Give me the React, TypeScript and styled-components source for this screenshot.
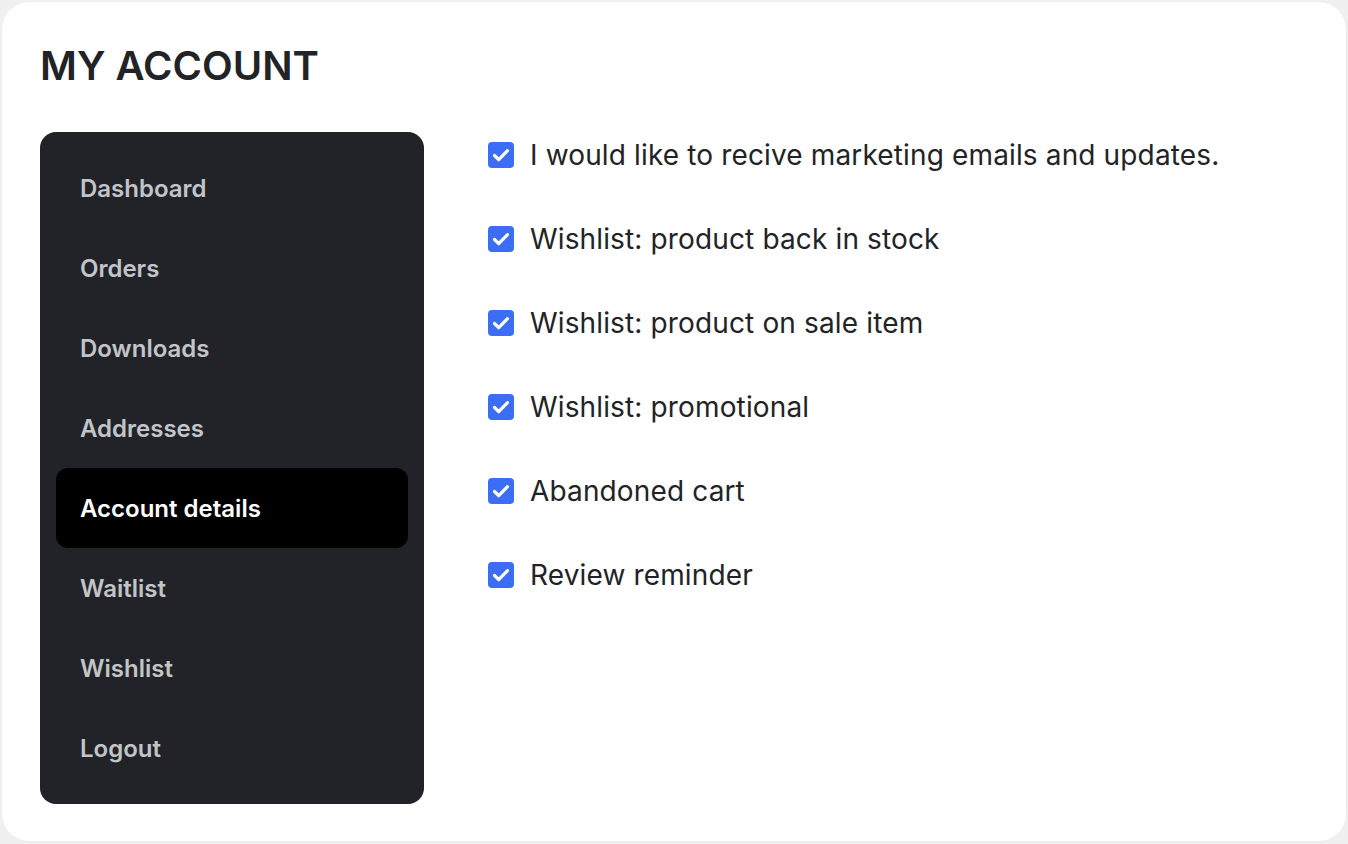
import styled, { createGlobalStyle } from "styled-components";

const GlobalStyle = createGlobalStyle`
  html, body {
    margin: 0;
    padding: 0;
    background: #f0f0f0;
    font-family: Inter, "Noto Sans", sans-serif;
  }
  * {
    box-sizing: border-box;
  }
`;

const menu = [
  "Dashboard",
  "Orders",
  "Downloads",
  "Addresses",
  "Account details",
  "Waitlist",
  "Wishlist",
  "Logout",
];

const options = [
  "I would like to recive marketing emails and updates.",
  "Wishlist: product back in stock",
  "Wishlist: product on sale item",
  "Wishlist: promotional",
  "Abandoned cart",
  "Review reminder",
];

const CheckIcon = () => (
  <svg width="26" height="26" viewBox="0 0 26 26">
    <rect x="0" y="0" width="26" height="26" rx="4" fill="#3c6ef5" />
    <path
      d="M6.5 13.5l4.2 4.2 8.8-9"
      fill="none"
      stroke="#fff"
      strokeWidth="3.2"
      strokeLinecap="round"
      strokeLinejoin="round"
    />
  </svg>
);

export default function App() {
  return (
    <>
      <GlobalStyle />
      <Card>
        <Title>MY ACCOUNT</Title>
        <Layout>
          <Sidebar>
            {menu.map((item) => (
              <MenuItem key={item} active={item === "Account details"}>
                {item}
              </MenuItem>
            ))}
          </Sidebar>
          <OptionList>
            {options.map((opt) => (
              <Option key={opt}>
                <CheckIcon />
                <OptionText>{opt}</OptionText>
              </Option>
            ))}
          </OptionList>
        </Layout>
      </Card>
    </>
  );
}

const Card = styled.div`
  margin: 1px 1px 2px 1px;
  height: 841px;
  background: #fff;
  border: 1px solid #ebebeb;
  border-radius: 28px;
  padding: 40px 38px 0 38px;
`;

const Title = styled.h1`
  margin: 0;
  font-size: 40px;
  line-height: 48px;
  font-weight: 600;
  color: #222326;
`;

const Layout = styled.div`
  display: flex;
  align-items: flex-start;
  gap: 64px;
  margin-top: 42px;
`;

const Sidebar = styled.nav`
  width: 384px;
  flex-shrink: 0;
  background: #212329;
  border-radius: 16px;
  padding: 16px;
  display: flex;
  flex-direction: column;
`;

const MenuItem = styled.div.withConfig({
  shouldForwardProp: (p) => p !== "active",
})<{ active?: boolean }>`
  height: 80px;
  display: flex;
  align-items: center;
  padding-left: 24px;
  border-radius: 12px;
  font-size: 24px;
  font-weight: 600;
  color: ${(p) => (p.active ? "#ffffff" : "#c2c4c8")};
  background: ${(p) => (p.active ? "#000000" : "transparent")};
`;

const OptionList = styled.div`
  display: flex;
  flex-direction: column;
  gap: 58px;
  padding-top: 10px;
`;

const Option = styled.label`
  display: flex;
  align-items: center;
  gap: 16px;
  height: 26px;
`;

const OptionText = styled.span`
  font-size: 28px;
  font-weight: 400;
  letter-spacing: 0.14px;
  color: #222326;
  line-height: 26px;
`;
